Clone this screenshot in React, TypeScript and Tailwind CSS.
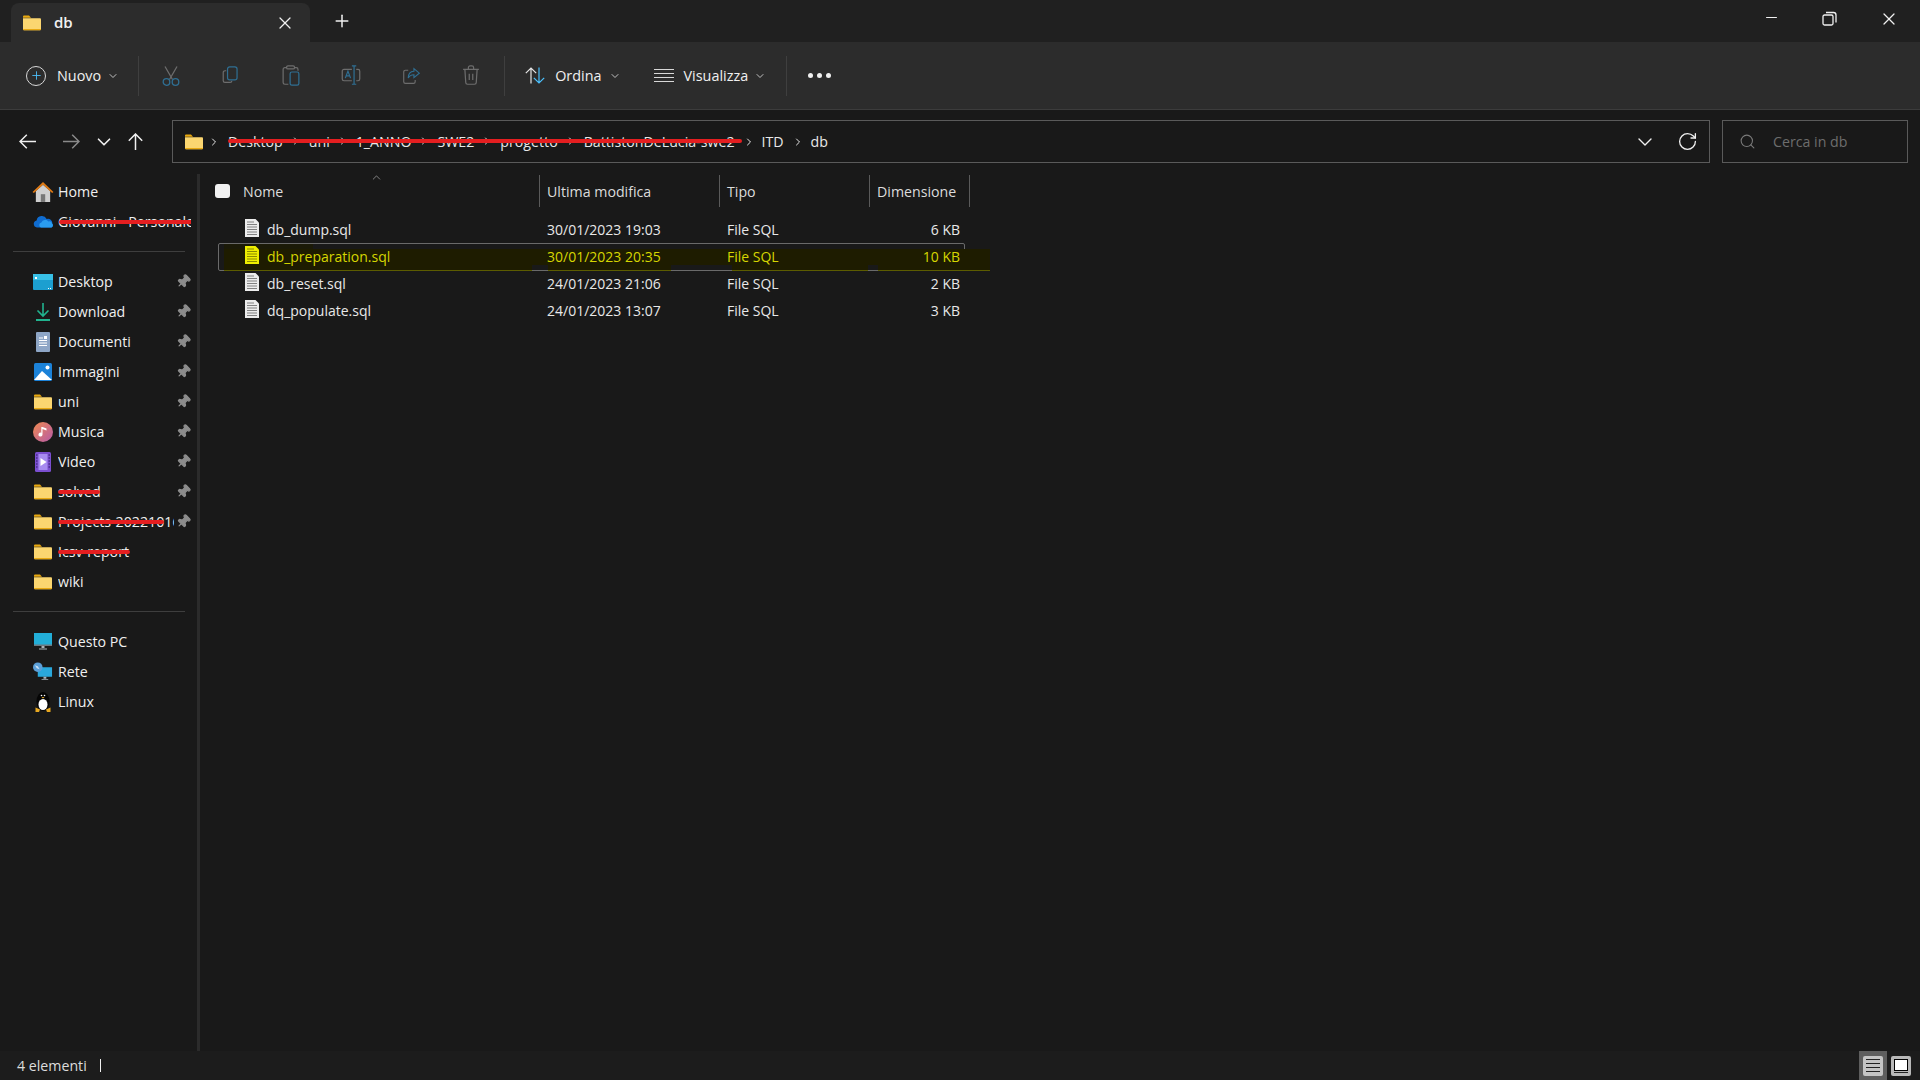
import { Fragment, ReactNode } from "react";
import { Plus, X, Minus, ChevronDown, ChevronRight, ChevronUp, RotateCw, Search, Pin } from "lucide-react";

const FONT = "font-['Open_Sans','Noto_Sans',sans-serif]";

function FolderIcon({ size = 20 }: { size?: number }) {
    return (
        <svg width={size} height={size} viewBox="0 0 20 20">
            <path d="M1 3.5a1 1 0 0 1 1-1h5l2 2.2H1z" fill="#e8a810" />
            <path d="M1 5.2h17a1 1 0 0 1 1 1v10a1 1 0 0 1-1 1H2a1 1 0 0 1-1-1z" fill="#fbd670" />
            <path d="M1 16h18v.3a1 1 0 0 1-1 1H2a1 1 0 0 1-1-1z" fill="#e8a810" />
        </svg>
    );
}

function RedLine({ left, width }: { left: number; width: number }) {
    return <span className="absolute top-1/2 -translate-y-1/2 h-[4px] bg-[#e41e20] rounded-full" style={{ left, width }} />;
}

function HomeIcon() {
    return (
        <svg width="22" height="22" viewBox="0 0 20 20" className="shrink-0">
            <path d="M3.5 9l6.5-5.5L16.500 9v10h-13z" fill="#cfcfcf" />
            <rect x="8" y="12" width="4" height="7" fill="#777777" />
            <path d="M0.5 10L10 1l9.500 9-1.200 1L10 3.500 1.700 11z" fill="#e07a14" />
        </svg>
    );
}

function CloudIcon() {
    return (
        <svg width="20" height="20" viewBox="0 0 20 20">
            <path d="M4 15.500a3.600 3.600 0 0 1-.4-7.100A5.400 5.400 0 0 1 13.700 7a4.300 4.300 0 0 1 5.600 4.500 2.500 2.500 0 0 1-.8 4z" fill="#0f6cd0" />
            <path d="M8 15.500a2.600 2.600 0 0 1 .4-5 4 4 0 0 1 7-1 3.200 3.200 0 0 1 3.800 2.200 2.300 2.300 0 0 1-.7 3.800z" fill="#2a9df0" />
        </svg>
    );
}

function DesktopIcon() {
    return (
        <svg width="20" height="20" viewBox="0 0 20 20">
            <rect x="0" y="2" width="20" height="16" rx="1" fill="#1c9fd0" />
            <rect x="0" y="2" width="20" height="6" fill="#38c0e6" />
            <rect x="2" y="5" width="2" height="2" fill="#ffffff" />
            <rect x="15" y="16" width="1" height="1" fill="#ffffff" />
            <rect x="17" y="16" width="1" height="1" fill="#ffffff" />
        </svg>
    );
}

function DownloadIcon() {
    return (
        <svg width="20" height="20" viewBox="0 0 20 20" fill="none" stroke="#21b38f" strokeWidth="1.6">
            <path d="M10 1v13M4.500 8.500L10 14l5.500-5.500" />
            <path d="M3 18h14" strokeWidth="2" />
        </svg>
    );
}

function DocsIcon() {
    return (
        <svg width="20" height="20" viewBox="0 0 20 20">
            <rect x="3" y="0" width="14" height="20" rx="1" fill="#8ea6c6" />
            <path d="M6 6h4M6 8.500h8M6 11h8M6 13.500h8" stroke="#ffffff" strokeWidth="1.2" />
            <path d="M11 4h3v3h-3z" fill="#ffffff" />
        </svg>
    );
}

function PicturesIcon() {
    return (
        <svg width="20" height="20" viewBox="0 0 20 20">
            <rect x="1" y="1" width="18" height="18" rx="1.500" fill="#1c82d8" />
            <circle cx="14.500" cy="5.500" r="2" fill="#ffffff" />
            <path d="M1 18l8-9 10 9z" fill="#ffffff" />
        </svg>
    );
}

function MusicIcon() {
    return (
        <svg width="20" height="20" viewBox="0 0 20 20">
            <defs>
                <linearGradient id="music" x1="0" y1="0" x2="1" y2="1">
                    <stop offset="0" stopColor="#f08a50" />
                    <stop offset="1" stopColor="#b65aa8" />
                </linearGradient>
            </defs>
            <circle cx="10" cy="10" r="10" fill="url(#music)" />
            <path d="M9.500 5v7.500a2 2 0 1 1-1.200-1.800V5z M9.500 5l4 1.500v2l-4-1.500z" fill="#ffffff" />
        </svg>
    );
}

function VideoIcon() {
    return (
        <svg width="20" height="20" viewBox="0 0 20 20">
            <rect x="2" y="0" width="16" height="20" rx="1.500" fill="#7b4fd0" />
            <rect x="5.500" y="2" width="9" height="16" fill="#a78bf0" />
            <path d="M7.500 6l6 4-6 4z" fill="#ffffff" />
            <path d="M3 3h1.500M3 6h1.500M3 9h1.500M3 12h1.500M3 15h1.500M15.500 3H17M15.500 6H17M15.500 9H17M15.500 12H17M15.500 15H17" stroke="#2e1c66" strokeWidth="1" />
        </svg>
    );
}

function PcIcon() {
    return (
        <svg width="20" height="20" viewBox="0 0 20 20">
            <rect x="1" y="1" width="18" height="13" fill="#22aed8" />
            <rect x="1" y="12.500" width="18" height="1.500" fill="#6d7880" />
            <path d="M8.500 14h3v2h-3zM6 16.500h8v1H6z" fill="#a9b2b8" />
        </svg>
    );
}

function NetworkIcon() {
    return (
        <svg width="21" height="20" viewBox="0 0 21 20">
            <rect x="5" y="5" width="15" height="10" fill="#2aa8dc" />
            <path d="M11 15h3v2h-3zM9 17.500h7v1H9z" fill="#a9b2b8" />
            <circle cx="5" cy="5" r="5" fill="#5b9fd8" />
            <path d="M2 3l3 1 2 3-3-1z" fill="#c9e0f5" />
        </svg>
    );
}

function LinuxIcon() {
    return (
        <svg width="20" height="20" viewBox="0 0 20 20">
            <ellipse cx="10" cy="9.500" rx="6.500" ry="9.500" fill="#050505" />
            <ellipse cx="10" cy="12.500" rx="4.500" ry="5.500" fill="#ffffff" />
            <circle cx="8.500" cy="3.500" r=".8" fill="#ffffff" />
            <circle cx="11.500" cy="3.500" r=".8" fill="#ffffff" />
            <path d="M8.500 5h3l-1.500 1.600z" fill="#e8a820" />
            <path d="M2.500 15.500l4.500 2-1 2.500H2.500zM17.500 15.500l-4.500 2 1 2.500h3.500z" fill="#e8a820" />
        </svg>
    );
}

function FileIcon({ active }: { active?: boolean }) {
    const fill = active ? "#eeee00" : "#ececec";
    const line = active ? "#8a8a00" : "#808080";
    return (
        <svg width="16" height="20" viewBox="0 0 16 20" className="shrink-0 -mt-[3px]">
            <path d="M1 1h10.500L15 4.500V19H1z" fill={fill} />
            <path d="M3 4h7M3 6.500h10M3 9h10M3 11.500h10M3 14h10M3 16.500h10" stroke={line} strokeWidth="1" />
        </svg>
    );
}

function ToolButton({ children, x }: { children: ReactNode; x?: number }) {
    return <div className="w-[60px] h-[24px] flex items-center justify-center shrink-0" style={x ? { marginLeft: x } : undefined}>{children}</div>;
}

const GRAY = "#6d6d6d";
const BLUE = "#2f6f93";

function CutIcon() {
    return (
        <svg width="18" height="20" viewBox="0 0 18 20" fill="none" strokeWidth="1.3">
            <path d="M3 0.500l7.500 13M15 0.500L7.500 13.500" stroke={GRAY} />
            <circle cx="4.500" cy="16" r="3.300" stroke={BLUE} />
            <circle cx="13.500" cy="16" r="3.300" stroke={BLUE} />
        </svg>
    );
}

function CopyIcon() {
    return (
        <svg width="18" height="19" viewBox="0 0 20 22" fill="none" strokeWidth="1.4">
            <path d="M4.500 5.500H3a2 2 0 0 0-2 2V17a2 2 0 0 0 2 2h6a2 2 0 0 0 2-2" stroke={GRAY} />
            <rect x="6" y="1" width="11" height="15" rx="2.500" stroke={BLUE} />
        </svg>
    );
}

function PasteIcon() {
    return (
        <svg width="18" height="21" viewBox="0 0 20 24" fill="none" strokeWidth="1.4">
            <path d="M5 3H3a2 2 0 0 0-2 2v15a2 2 0 0 0 2 2h4M14 3h2a2 2 0 0 1 2 2v1.500" stroke={GRAY} />
            <rect x="5" y="1" width="9" height="3.500" rx="1.500" stroke={GRAY} />
            <rect x="9" y="8" width="10" height="15" rx="2" stroke={BLUE} />
        </svg>
    );
}

function RenameIcon() {
    return (
        <svg width="20" height="21" viewBox="0 0 22 24" fill="none" strokeWidth="1.4">
            <path d="M12 5H3a2 2 0 0 0-2 2v9a2 2 0 0 0 2 2h9M17 5h2a2 2 0 0 1 2 2v9a2 2 0 0 1-2 2h-2" stroke={GRAY} />
            <path d="M14.500 1v21M12 1h5M12 22h5" stroke={BLUE} />
            <path d="M4.500 15l3-8 3 8M5.500 12.500h4" stroke={BLUE} />
        </svg>
    );
}

function ShareIcon() {
    return (
        <svg width="19" height="18" viewBox="0 0 22 22" fill="none" strokeWidth="1.4">
            <path d="M7 4H3.500a2 2 0 0 0-2 2v12a2 2 0 0 0 2 2h10a2 2 0 0 0 2-2v-2" stroke={GRAY} />
            <path d="M14 2l6.500 5.500-6.500 5.500V9.500c-3 0-5.500 1-7 4 0-5 2.500-8 7-8.300z" stroke={BLUE} />
        </svg>
    );
}

function TrashIcon() {
    return (
        <svg width="18" height="21" viewBox="0 0 20 24" fill="none" stroke={GRAY} strokeWidth="1.4">
            <path d="M1 5h18M7 5V3a2 2 0 0 1 2-2h2a2 2 0 0 1 2 2v2M3 5l1 15a2 2 0 0 0 2 2h8a2 2 0 0 0 2-2l1-15M8 10v7M12 10v7" />
        </svg>
    );
}

function SortIcon() {
    return (
        <svg width="20" height="17" viewBox="0 0 20 17" fill="none" strokeWidth="1.2">
            <path d="M6 16.500V1M.8 6.200L6 1l5.200 5.200" stroke="#e6e6e6" />
            <path d="M14 .5V16M8.800 10.800L14 16l5.200-5.200" stroke="#4cc2ff" />
        </svg>
    );
}

function NavArrow({ className, color }: { className: string; color: string }) {
    return (
        <svg width="17" height="15" viewBox="0 0 17 15" fill="none" stroke={color} strokeWidth="1.5" className={className}>
            <path d="M17 7.500H1M7.800 .8L1 7.500l6.800 6.700" />
        </svg>
    );
}

function Pinned() {
    return <Pin size={15} strokeWidth={2} fill="#8c8c8c" color="#8c8c8c" className="rotate-45" />;
}

interface NavItemProps {
    icon: ReactNode;
    label: string;
    pinned?: boolean;
    redacted?: number;
    redactedLeft?: number;
}

function NavItem({ icon, label, pinned, redacted, redactedLeft = 0 }: NavItemProps) {
    return (
        <div className="h-[30px] flex items-center pl-[33px] pr-[6px]">
            <div className="w-[20px] h-[20px] flex items-center justify-center shrink-0">{icon}</div>
            <div className={`relative ml-[5px] whitespace-nowrap overflow-hidden text-[14.2px] text-[#f0f0f0] leading-[30px] ${pinned ? "w-[116px]" : "w-[135px]"}`}>
                {label}
                {redacted ? <RedLine left={redactedLeft} width={redacted} /> : null}
            </div>
            {pinned ? <div className="ml-auto flex items-center"><Pinned /></div> : null}
        </div>
    );
}

function NavDivider() {
    return <div className="h-px bg-[#3e3e3e] ml-[13px] mr-[12px] my-[14.5px]" />;
}

const CRUMBS = ["Desktop", "uni", "1_ANNO", "SWE2", "progetto", "BattistonDeLucia-swe2"];

interface RowProps {
    name: string;
    date: string;
    size: string;
    active?: boolean;
}

function Highlight() {
    // the yellow marker on this row is blotchy in the reference, hence the separate chunks
    const chunk = "absolute top-[22px] h-[6px] bg-[#1e1c00] border-b border-[#5c5c00]";
    return (
        <>
            <div className="absolute left-[18px] top-0 w-[747px] h-[28px] border border-[#6a6a6a] rounded-[2px]" />
            <div className="absolute left-[24px] top-[6px] w-[766px] h-[16px] bg-[#1e1c00]" />
            <div className="absolute left-[24px] top-[1px] w-[89px] h-[5px] bg-[#1b1a08]" />
            <div className={`${chunk} left-[24px] w-[308px]`} />
            <div className={`${chunk} left-[348px] w-[123px]`} />
            <div className={`${chunk} left-[532px] w-[136px]`} />
            <div className={`${chunk} left-[678px] w-[112px]`} />
        </>
    );
}

function FileRow({ name, date, size, active }: RowProps) {
    const text = active ? "text-[#d6d600]" : "text-[#e8e8e8]";
    return (
        <div className={`relative h-[27px] flex items-center text-[14px] ${text}`}>
            {active ? <Highlight /> : null}
            <div className="relative w-[340px] pl-[44px] flex items-center gap-[7px] shrink-0">
                <FileIcon active={active} />
                <span>{name}</span>
            </div>
            <div className="relative w-[180px] pl-[7px] shrink-0">{date}</div>
            <div className="relative w-[150px] pl-[7px] shrink-0">File SQL</div>
            <div className="relative w-[90px] text-right shrink-0">{size}</div>
        </div>
    );
}

function HeaderCell({ label, width, pl }: { label: string; width: string; pl: string }) {
    return (
        <div className={`h-[32px] flex items-center border-r border-[#5a5a5a] shrink-0 ${width} ${pl}`}>
            <span className="pt-[1px]">{label}</span>
        </div>
    );
}

export default function App() {
    return (
        <div className={`w-[1920px] h-[1080px] bg-[#191919] flex flex-col overflow-hidden text-[#e8e8e8] ${FONT}`}>
            {/* Title bar with the tab */}
            <header className="h-[42px] bg-[#202020] flex shrink-0">
                <div className="ml-[11px] mt-[3px] w-[299px] h-[39px] bg-[#2c2c2c] rounded-t-[8px] flex items-center pl-[11px] pr-[15px]">
                    <FolderIcon />
                    <span className="ml-[12px] text-[15px] font-semibold text-[#f2f2f2]">db</span>
                    <X size={20} strokeWidth={1.5} className="ml-auto text-[#f0f0f0]" />
                </div>
                <div className="ml-[22px] flex items-center">
                    <Plus size={20} strokeWidth={1.8} className="text-[#f0f0f0]" />
                </div>
                <div className="ml-auto flex items-start pt-[9px] pr-[21px] gap-[41px] text-[#f0f0f0]">
                    <Minus size={17} strokeWidth={1.6} />
                    <svg width="17" height="17" viewBox="0 0 17 17" fill="none" stroke="currentColor" strokeWidth="1.3" className="mt-px">
                        <rect x="2" y="5" width="10" height="10" rx="1.5" />
                        <path d="M5 2.500h7.500a2.500 2.500 0 0 1 2.500 2.500v7.500" />
                    </svg>
                    <X size={20} strokeWidth={1.5} />
                </div>
            </header>

            {/* Command bar */}
            <div className="h-[68px] bg-[#2c2c2c] border-b border-[#3c3c3c] flex items-center shrink-0 text-[14.4px] text-[#f0f0f0]">
                <div className="ml-[26px] w-[20px] h-[20px] rounded-full border border-[#d8d8d8] flex items-center justify-center">
                    <Plus size={13} strokeWidth={1.6} color="#4cc2ff" />
                </div>
                <span className="ml-[11px]">Nuovo</span>
                <ChevronDown size={12} className="ml-[6px] text-[#c0c0c0]" />
                <div className="ml-[19px] w-px h-[40px] bg-[#3f3f3f]" />
                <ToolButton x={2}><CutIcon /></ToolButton>
                <ToolButton><CopyIcon /></ToolButton>
                <ToolButton><PasteIcon /></ToolButton>
                <ToolButton><RenameIcon /></ToolButton>
                <ToolButton><ShareIcon /></ToolButton>
                <ToolButton><TrashIcon /></ToolButton>
                <div className="w-px h-[40px] bg-[#3f3f3f] ml-[3px]" />
                <div className="ml-[20px]"><SortIcon /></div>
                <span className="ml-[10px]">Ordina</span>
                <ChevronDown size={12} className="ml-[7px] text-[#c0c0c0]" />
                <svg width="20" height="14" viewBox="0 0 20 14" className="ml-[33px]" stroke="#d8d8d8" strokeWidth="1">
                    <path d="M0 .5h20M0 4.500h20M0 8.500h20M0 12.500h20" />
                </svg>
                <span className="ml-[10px]">Visualizza</span>
                <ChevronDown size={12} className="ml-[6px] text-[#c0c0c0]" />
                <div className="ml-[20px] w-px h-[40px] bg-[#3f3f3f]" />
                <div className="ml-[21px] flex gap-[4px]">
                    <span className="w-[5px] h-[5px] rounded-full bg-[#f0f0f0]" />
                    <span className="w-[5px] h-[5px] rounded-full bg-[#f0f0f0]" />
                    <span className="w-[5px] h-[5px] rounded-full bg-[#f0f0f0]" />
                </div>
            </div>

            {/* Address row */}
            <div className="h-[64px] flex items-start pt-[10px] shrink-0">
                <div className="h-[43px] w-[172px] shrink-0 flex items-center">
                    <NavArrow className="ml-[19px]" color="#f0f0f0" />
                    <NavArrow className="ml-[27px] rotate-180" color="#8a8a8a" />
                    <ChevronDown size={22} strokeWidth={1.8} className="ml-[13px] text-[#f0f0f0]" />
                    <NavArrow className="ml-[12px] rotate-90" color="#f0f0f0" />
                </div>
                <div className="h-[43px] w-[1538px] border border-[#5a5a5a] flex items-center pl-[11px] text-[14.2px] text-[#e8e8e8] shrink-0">
                    <FolderIcon />
                    <ChevronRight size={12} strokeWidth={2} className="ml-[4px]" />
                    <div className="relative ml-[8px] flex items-center whitespace-nowrap">
                        {CRUMBS.map((crumb, i) => (
                            <Fragment key={crumb}>
                                {i > 0 ? <ChevronRight size={12} strokeWidth={2} className="mx-[7px]" /> : null}
                                <span>{crumb}</span>
                            </Fragment>
                        ))}
                        <RedLine left={0} width={514} />
                    </div>
                    <ChevronRight size={12} strokeWidth={2} className="ml-[8px]" />
                    <span className="ml-[7px]">ITD</span>
                    <ChevronRight size={12} strokeWidth={2} className="ml-[8px]" />
                    <span className="ml-[7px]">db</span>
                    <ChevronDown size={24} strokeWidth={1.4} className="ml-auto text-[#f0f0f0]" />
                    <RotateCw size={21} strokeWidth={1.5} className="ml-[20px] mr-[11px] text-[#f0f0f0]" />
                </div>
                <div className="ml-[12px] h-[43px] w-[186px] border border-[#5a5a5a] flex items-center pl-[16px] shrink-0">
                    <Search size={17} strokeWidth={1.5} className="text-[#7a7a7a]" />
                    <span className="ml-[17px] text-[14.2px] text-[#6d6d6d]">Cerca in db</span>
                </div>
            </div>

            {/* Main area */}
            <div className="flex-1 min-h-0 flex">
                <nav className="w-[197px] shrink-0 pt-[2.5px]">
                    <NavItem icon={<HomeIcon />} label="Home" />
                    <NavItem icon={<CloudIcon />} label="Giovanni - Personale" redacted={134} redactedLeft={1} />
                    <NavDivider />
                    <NavItem icon={<DesktopIcon />} label="Desktop" pinned />
                    <NavItem icon={<DownloadIcon />} label="Download" pinned />
                    <NavItem icon={<DocsIcon />} label="Documenti" pinned />
                    <NavItem icon={<PicturesIcon />} label="Immagini" pinned />
                    <NavItem icon={<FolderIcon />} label="uni" pinned />
                    <NavItem icon={<MusicIcon />} label="Musica" pinned />
                    <NavItem icon={<VideoIcon />} label="Video" pinned />
                    <NavItem icon={<FolderIcon />} label="solved" pinned redacted={42} />
                    <NavItem icon={<FolderIcon />} label="Projects-20221016" pinned redacted={106} />
                    <NavItem icon={<FolderIcon />} label="Icsv-report" redacted={72} />
                    <NavItem icon={<FolderIcon />} label="wiki" />
                    <NavDivider />
                    <NavItem icon={<PcIcon />} label="Questo PC" />
                    <NavItem icon={<NetworkIcon />} label="Rete" />
                    <NavItem icon={<LinuxIcon />} label="Linux" />
                </nav>
                <div className="w-[3px] bg-[#2b2b2b] shrink-0" />
                <main className="flex-1 min-w-0 pt-[1px]">
                    <div className="h-[32px] flex text-[14.2px] text-[#dcdcdc] relative">
                        <div className="w-[15px] ml-[15px] mt-[9px] h-[14px] bg-[#f2f2f2] rounded-[3px] shrink-0" />
                        <HeaderCell label="Nome" width="w-[310px]" pl="pl-[13px]" />
                        <HeaderCell label="Ultima modifica" width="w-[180px]" pl="pl-[7px]" />
                        <HeaderCell label="Tipo" width="w-[150px]" pl="pl-[7px]" />
                        <HeaderCell label="Dimensione" width="w-[100px]" pl="pl-[7px]" />
                        <ChevronUp size={13} strokeWidth={1.2} className="absolute left-[170px] -top-[4px] text-[#b8b8b8]" />
                    </div>
                    <div className="pt-[9px]">
                        <FileRow name="db_dump.sql" date="30/01/2023 19:03" size="6 KB" />
                        <FileRow name="db_preparation.sql" date="30/01/2023 20:35" size="10 KB" active />
                        <FileRow name="db_reset.sql" date="24/01/2023 21:06" size="2 KB" />
                        <FileRow name="dq_populate.sql" date="24/01/2023 13:07" size="3 KB" />
                    </div>
                </main>
            </div>

            {/* Status bar */}
            <footer className="h-[29px] bg-[#1c1c1c] flex items-center shrink-0 text-[14.2px] text-[#dcdcdc]">
                <span className="ml-[17px]">4 elementi</span>
                <div className="ml-[13px] w-px h-[13px] bg-[#f0f0f0]" />
                <div className="ml-auto h-full w-[28px] bg-[#5e5e5e] flex items-center justify-center">
                    <div className="w-[20px] h-[20px] bg-[#c4c4c4] rounded-[2px] flex flex-col justify-center gap-[3px] px-[3px]">
                        <div className="h-px bg-[#222222]" />
                        <div className="h-px bg-[#222222]" />
                        <div className="h-px bg-[#222222]" />
                        <div className="h-px bg-[#222222]" />
                    </div>
                </div>
                <div className="ml-[4px] mr-[9px] w-[20px] h-[20px] bg-[#b8b8b8] rounded-[2px] flex flex-col items-center justify-center gap-px">
                    <div className="w-[14px] h-[12px] bg-white border border-black" />
                    <div className="w-[14px] h-px bg-[#222222]" />
                </div>
            </footer>
        </div>
    );
}
